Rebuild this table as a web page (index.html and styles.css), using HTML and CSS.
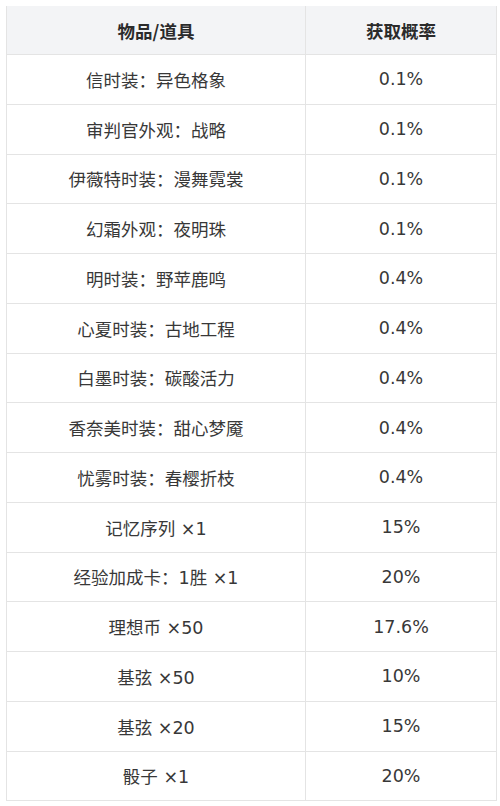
FILE: index.html
```
<!DOCTYPE html>
<html lang="zh">
<head>
<meta charset="utf-8">
<link rel="stylesheet" href="styles.css">
</head>
<body>
<table class="prob">
  <thead>
    <tr><th class="c1">物品/道具</th><th class="c2">获取概率</th></tr>
  </thead>
  <tbody>
    <tr><td>信时装：异色格象</td><td>0.1%</td></tr>
    <tr><td>审判官外观：战略</td><td>0.1%</td></tr>
    <tr><td>伊薇特时装：漫舞霓裳</td><td>0.1%</td></tr>
    <tr><td>幻霜外观：夜明珠</td><td>0.1%</td></tr>
    <tr><td>明时装：野苹鹿鸣</td><td>0.4%</td></tr>
    <tr><td>心夏时装：古地工程</td><td>0.4%</td></tr>
    <tr><td>白墨时装：碳酸活力</td><td>0.4%</td></tr>
    <tr><td>香奈美时装：甜心梦魇</td><td>0.4%</td></tr>
    <tr><td>忧雾时装：春樱折枝</td><td>0.4%</td></tr>
    <tr><td>记忆序列 ×1</td><td>15%</td></tr>
    <tr><td>经验加成卡：1胜 ×1</td><td>20%</td></tr>
    <tr><td>理想币 ×50</td><td>17.6%</td></tr>
    <tr><td>基弦 ×50</td><td>10%</td></tr>
    <tr><td>基弦 ×20</td><td>15%</td></tr>
    <tr><td>骰子 ×1</td><td>20%</td></tr>
  </tbody>
</table>
</body>
</html>
```
FILE: styles.css
```
html, body {
  margin: 0;
  padding: 0;
  background: #ffffff;
}
body {
  padding: 6px 0 0 6px;
  font-family: "DejaVu Sans", "Noto Sans CJK SC", sans-serif;
  color: #383838;
}
.prob {
  border-collapse: collapse;
  width: 489px;
  table-layout: fixed;
}
.prob th, .prob td {
  border: 1px solid #e4e4e4;
  text-align: center;
  vertical-align: middle;
  padding: 0;
  font-size: 17.5px;
}
.prob thead th {
  border-top: none;
}
.prob th {
  background: #f3f4f6;
  font-weight: bold;
  height: 48px;
  font-family: "Noto Sans CJK SC", sans-serif;
  color: #2b2b2b;
}
.prob td {
  height: 48.75px;
  font-weight: normal;
}
.c1 { width: 298px; }
.c2 { width: 190px; }
```
